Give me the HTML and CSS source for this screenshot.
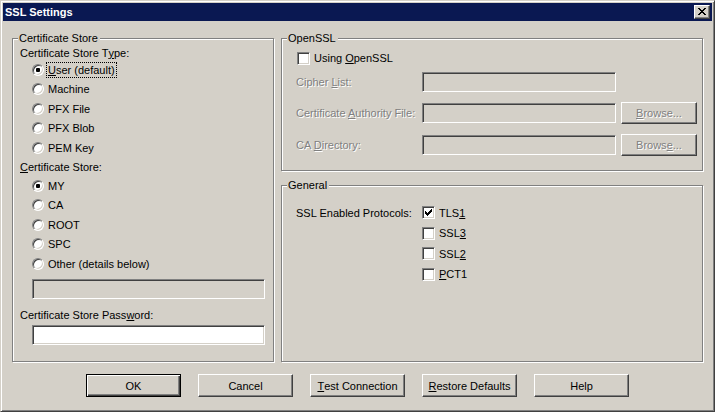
FILE: index.html
```html
<!DOCTYPE html>
<html>
<head>
<meta charset="utf-8">
<title>SSL Settings</title>
<link rel="stylesheet" href="styles.css">
</head>
<body>
<div class="window">
  <div class="titlebar">
    <span class="title">SSL Settings</span>
    <span class="close-btn"><svg width="8" height="7" viewBox="0 0 8 7" shape-rendering="crispEdges"><path fill="#000" d="M0 0h2v1H0zM6 0h2v1H6zM1 1h2v1H1zM5 1h2v1H5zM2 2h4v1H2zM3 3h2v1H3zM2 4h4v1H2zM1 5h2v1H1zM5 5h2v1H5zM0 6h2v1H0zM6 6h2v1H6z"/></svg></span>
  </div>
  <div class="main">
    <fieldset class="group group-store">
      <legend>Certificate Store</legend>
      <div class="store-body">
        <div class="label-row">Certificate Store T<u>y</u>pe:</div>
        <div class="radio-row"><span class="radio checked"></span><span class="opt focus"><u>U</u>ser (default)</span></div>
        <div class="radio-row"><span class="radio"></span><span class="opt">Machine</span></div>
        <div class="radio-row"><span class="radio"></span><span class="opt">PFX File</span></div>
        <div class="radio-row"><span class="radio"></span><span class="opt">PFX Blob</span></div>
        <div class="radio-row"><span class="radio"></span><span class="opt">PEM Key</span></div>
        <div class="label-row label-row2"><u>C</u>ertificate Store:</div>
        <div class="radio-row"><span class="radio checked"></span><span class="opt">MY</span></div>
        <div class="radio-row"><span class="radio"></span><span class="opt">CA</span></div>
        <div class="radio-row"><span class="radio"></span><span class="opt">ROOT</span></div>
        <div class="radio-row"><span class="radio"></span><span class="opt">SPC</span></div>
        <div class="radio-row"><span class="radio"></span><span class="opt">Other (details below)</span></div>
        <div class="field disabled store-field other-field"></div>
        <div class="label-row pw-label">Certificate Store Pass<u>w</u>ord:</div>
        <div class="field store-field pw-field"></div>
      </div>
    </fieldset>
    <div class="right-col">
      <fieldset class="group group-openssl">
        <legend>OpenSSL</legend>
        <div class="openssl-body">
          <div class="check-row"><span class="checkbox"></span><span class="opt">Using <u>O</u>penSSL</span></div>
          <div class="form-row row1"><span class="form-label disabled-text">Cipher <u>L</u>ist:</span><span class="field disabled wide-field"></span></div>
          <div class="form-row row2"><span class="form-label disabled-text">Certificate <u>A</u>uthority File:</span><span class="field disabled wide-field"></span><span class="btn browse disabled-text"><u>B</u>rowse...</span></div>
          <div class="form-row row3"><span class="form-label disabled-text">CA <u>D</u>irectory:</span><span class="field disabled wide-field"></span><span class="btn browse disabled-text">Brows<u>e</u>...</span></div>
        </div>
      </fieldset>
      <fieldset class="group group-general">
        <legend>General</legend>
        <div class="general-body">
          <div class="proto-label">SSL Enabled Protocols:</div>
          <div class="proto-list">
            <div class="proto-row r-odd"><span class="checkbox"><svg width="7" height="7" viewBox="0 0 7 7" shape-rendering="crispEdges"><path fill="#000" d="M0 2h1v3H0zM1 3h1v3H1zM2 4h1v3H2zM3 3h1v3H3zM4 2h1v3H4zM5 1h1v3H5zM6 0h1v3H6z"/></svg></span><span class="opt">TLS<u>1</u></span></div>
            <div class="proto-row r-even"><span class="checkbox"></span><span class="opt">SSL<u>3</u></span></div>
            <div class="proto-row r-odd"><span class="checkbox"></span><span class="opt">SSL<u>2</u></span></div>
            <div class="proto-row r-even"><span class="checkbox"></span><span class="opt"><u>P</u>CT1</span></div>
          </div>
        </div>
      </fieldset>
    </div>
  </div>
  <div class="buttons">
    <span class="btn push default">OK</span>
    <span class="btn push">Cancel</span>
    <span class="btn push"><u>T</u>est Connection</span>
    <span class="btn push"><u>R</u>estore Defaults</span>
    <span class="btn push">Help</span>
  </div>
</div>
</body>
</html>
```

FILE: styles.css
```css
* { box-sizing: border-box; }
html, body { margin: 0; padding: 0; background: #d4d0c8; }
body {
  font-family: "Liberation Sans", Arial, sans-serif;
  font-size: 11px;
  color: #000;
  white-space: nowrap;
}
u { text-underline-offset: 1px; }

.window {
  width: 715px;
  height: 412px;
  border: 1px solid;
  border-color: #d4d0c8 #404040 #404040 #d4d0c8;
  box-shadow: inset 1px 1px 0 #fff, inset -1px -1px 0 #808080;
  padding: 2px;
  display: flex;
  flex-direction: column;
  background: #d4d0c8;
}

.titlebar {
  height: 18px;
  background: #0a1852;
  display: flex;
  align-items: center;
  justify-content: space-between;
  padding: 0 2px;
}
.title {
  color: #fff;
  font-weight: bold;
  line-height: 13px;
}
.close-btn {
  width: 16px;
  height: 14px;
  background: #d4d0c8;
  border: 1px solid;
  border-color: #fff #404040 #404040 #fff;
  box-shadow: inset -1px -1px 0 #808080;
  display: flex;
  align-items: center;
  justify-content: center;
  padding-bottom: 1px;
}
.close-btn svg { display: block; }

.main {
  display: flex;
  gap: 7px;
  margin: 11px 9px 0 9px;
  height: 330px;
}

.group {
  margin: 0;
  padding: 0;
  border: 1px solid #808080;
  box-shadow: inset 1px 1px 0 #fff, 1px 1px 0 #fff;
  min-width: 0;
}
.group legend {
  margin-left: 5px;
  padding: 0 2px 0 1px;
  line-height: 13px;
  background: #d4d0c8;
}

.group-store { width: 262px; }
.store-body {
  display: flex;
  flex-direction: column;
  padding-left: 7px;
}
.label-row {
  height: 15px;
  display: flex;
  align-items: center;
}
.label-row2 { height: 18.5px; }
.radio-row {
  height: 19.5px;
  display: flex;
  align-items: center;
  padding-left: 12px;
}
.radio {
  width: 12px;
  height: 12px;
  border-radius: 50%;
  border: 1px solid;
  border-color: #808080 #fff #fff #808080;
  box-shadow: inset 1px 1px 0 #404040, inset -1px -1px 0 #d4d0c8;
  background: #fff;
  display: flex;
  align-items: center;
  justify-content: center;
  flex: none;
}
.radio.checked::after {
  content: "";
  width: 4px;
  height: 4px;
  border-radius: 1px;
  background: #000;
}
.opt {
  margin-left: 3px;
  padding: 0 1px;
  line-height: 14px;
}
.opt.focus { outline: 1px dotted #000; outline-offset: 0; }

.field {
  display: block;
  height: 20px;
  border: 1px solid;
  border-color: #808080 #fff #fff #808080;
  box-shadow: inset 1px 1px 0 #404040, inset -1px -1px 0 #d4d0c8;
  background: #fff;
}
.field.disabled { background: #d4d0c8; }
.store-field { width: 233px; margin-left: 12px; }
.other-field { margin-top: 5.5px; }
.pw-label { margin-top: 8px; height: 16px; }
.pw-field { margin-top: 2px; }

.right-col {
  width: 422px;
  display: flex;
  flex-direction: column;
  gap: 8px;
}
.group-openssl { flex: none; }
.openssl-body {
  display: flex;
  flex-direction: column;
  padding: 0 0 14px 14px;
}
.check-row {
  height: 20px;
  margin-top: 3px;
  margin-left: 1px;
  display: flex;
  align-items: center;
}
.checkbox {
  width: 13px;
  height: 13px;
  border: 1px solid;
  border-color: #808080 #fff #fff #808080;
  box-shadow: inset 1px 1px 0 #404040, inset -1px -1px 0 #d4d0c8;
  background: #fff;
  display: flex;
  align-items: center;
  justify-content: center;
  flex: none;
}
.checkbox svg { display: block; }
.check-row .opt, .proto-row .opt { margin-left: 3px; }

.form-row {
  height: 22px;
  display: flex;
  align-items: center;
}
.row1 { margin-top: 3px; }
.row2 { margin-top: 9px; }
.row3 { margin-top: 10px; }
.form-label { width: 126px; flex: none; }
.wide-field { width: 194px; flex: none; }
.disabled-text { color: #808080; text-shadow: 1px 1px 0 #fff; }

.btn {
  display: flex;
  align-items: center;
  justify-content: center;
  background: #d4d0c8;
  border: 1px solid;
  border-color: #fff #404040 #404040 #fff;
  box-shadow: inset -1px -1px 0 #808080;
  flex: none;
}
.browse {
  width: 76px;
  height: 22px;
  margin-left: 5px;
}

.group-general { flex: 1; }
.general-body {
  display: flex;
  padding: 10px 0 0 14px;
}
.proto-label {
  width: 126px;
  height: 21px;
  display: flex;
  align-items: center;
}
.proto-list { display: flex; flex-direction: column; }
.proto-row {
  display: flex;
  align-items: center;
}
.r-odd { height: 21px; }
.r-even { height: 20px; }

.buttons {
  display: flex;
  justify-content: center;
  gap: 17px;
  margin-top: 12px;
}
.push {
  width: 95px;
  height: 23px;
}
.push.default {
  border-color: #000;
  box-shadow: inset 1px 1px 0 #fff, inset -1px -1px 0 #404040, inset -2px -2px 0 #808080;
}
```
